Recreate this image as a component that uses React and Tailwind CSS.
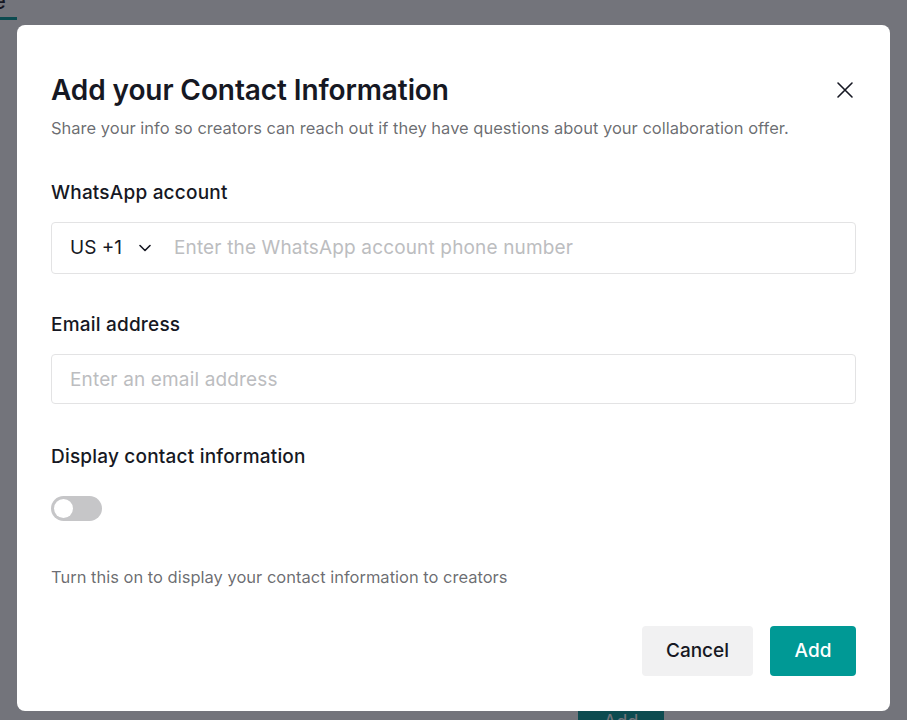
import { useState } from 'react';

function CloseIcon() {
  return (
    <svg width="18" height="18" viewBox="0 0 18 18" fill="none" stroke="#161823" strokeWidth="1.6" strokeLinecap="round">
      <path d="M2 2L16 16M16 2L2 16" />
    </svg>
  );
}

function Chevron() {
  return (
    <svg width="12" height="14" viewBox="0 0 12 14" fill="none" stroke="#161823" strokeWidth="1.6" strokeLinecap="round" strokeLinejoin="round">
      <path d="M1 4.5L6 9.5L11 4.5" />
    </svg>
  );
}

export default function App() {
  const [phone, setPhone] = useState('');
  const [email, setEmail] = useState('');
  const [showContact, setShowContact] = useState(false);

  return (
    <div className="relative h-[720px] w-[907px] overflow-hidden bg-white font-['Inter',sans-serif] text-[#161823]">
      {/* Page underneath the dialog */}
      <div className="flex h-full flex-col justify-between">
        <div className="-mt-[12px] flex">
          <div className="flex flex-col">
            <span className="-ml-[8px] text-[24px] leading-[26px] text-[#161823]">e</span>
            <div className="mt-[3px] h-[3px] w-[17px] bg-[#009995]" />
          </div>
        </div>
        <div className="-mb-[20px] flex pl-[578px]">
          <div className="flex h-[30px] w-[86px] justify-center bg-[#009995] text-[18px] leading-[24px] text-white">Add</div>
        </div>
      </div>

      {/* Dialog */}
      <div className="absolute inset-0 bg-[rgba(22,24,35,0.6)] pl-[17px] pt-[25px]">
        <div className="w-[873px] rounded-[8px] bg-white px-[34px] pb-[35px] pt-[47px]">
          <div className="flex items-start justify-between">
            <h2 className="text-[28px] font-semibold leading-[36px] tracking-[-0.1px]">Add your Contact Information</h2>
            <button className="mr-[2px] mt-[9px]" aria-label="Close">
              <CloseIcon />
            </button>
          </div>
          <p className="mt-[9px] text-[16.5px] leading-[22px] text-[rgba(22,24,35,0.65)]">
            Share your info so creators can reach out if they have questions about your collaboration offer.
          </p>

          <label className="mt-[42px] block text-[19px] font-medium leading-[24px] tracking-[0.2px]">WhatsApp account</label>
          <div className="mt-[17px] flex h-[52px] items-center rounded-[4px] border border-[#e3e3e4] px-[18px]">
            <button className="flex items-center gap-[17px] text-[19px] leading-[24px]">
              <span>US +1</span>
              <Chevron />
            </button>
            <input
              value={phone}
              onChange={(e) => setPhone(e.target.value)}
              placeholder="Enter the WhatsApp account phone number"
              className="ml-[23px] flex-1 bg-transparent text-[19px] leading-[24px] tracking-[0.15px] outline-none placeholder:text-[#bcbdc0]"
            />
          </div>

          <label className="mt-[39px] block text-[19px] font-medium leading-[24px] tracking-[0.2px]">Email address</label>
          <input
            value={email}
            onChange={(e) => setEmail(e.target.value)}
            placeholder="Enter an email address"
            className="mt-[17px] block h-[50px] w-full rounded-[4px] border border-[#e3e3e4] px-[18px] text-[19px] tracking-[0.15px] outline-none placeholder:text-[#bcbdc0]"
          />

          <label className="mt-[41px] block text-[19px] font-medium leading-[24px] tracking-[0.2px]">Display contact information</label>
          <button
            onClick={() => setShowContact(!showContact)}
            className={`mt-[27px] flex h-[25px] w-[51px] items-center rounded-full p-[3px] ${showContact ? 'justify-end bg-[#009995]' : 'justify-start bg-[#c6c6c8]'}`}
            aria-label="Display contact information"
          >
            <span className="h-[19px] w-[19px] rounded-full bg-white" />
          </button>
          <p className="mt-[46px] text-[16.5px] leading-[20px] text-[rgba(22,24,35,0.65)]">
            Turn this on to display your contact information to creators
          </p>

          <div className="mt-[39px] flex justify-end gap-[17px]">
            <button className="h-[50px] w-[111px] rounded-[4px] bg-[#f1f1f2] text-[19px] font-medium">Cancel</button>
            <button className="h-[50px] w-[86px] rounded-[4px] bg-[#009995] text-[19px] font-medium text-white">Add</button>
          </div>
        </div>
      </div>
    </div>
  );
}
